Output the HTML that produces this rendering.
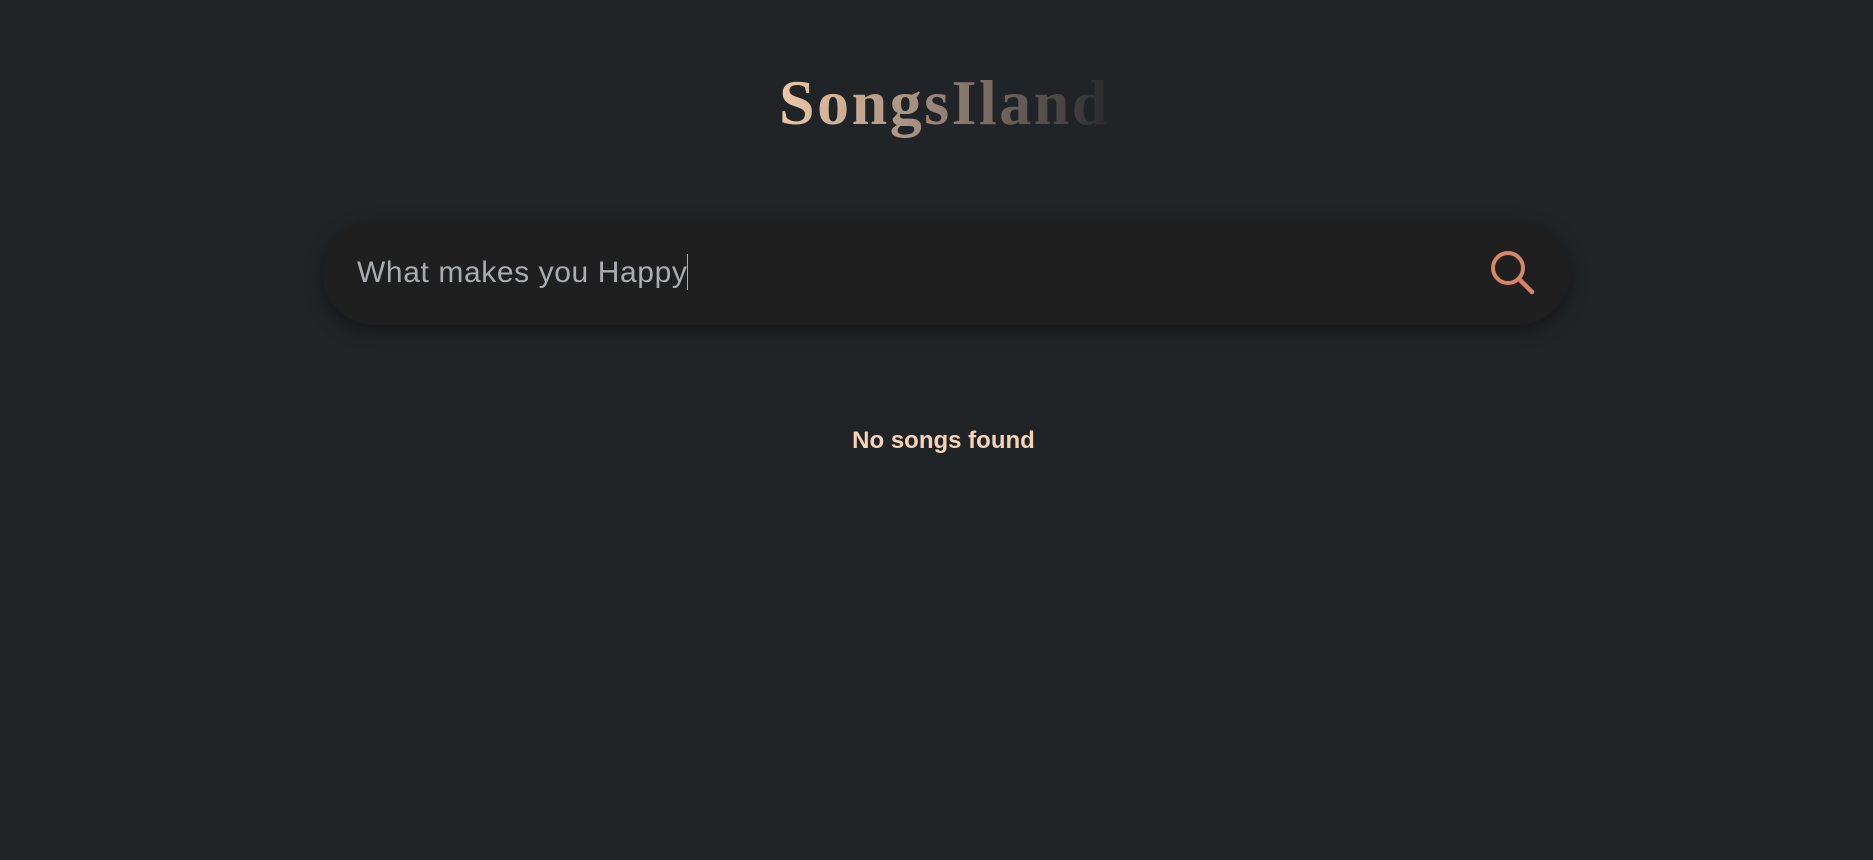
<!DOCTYPE html>
<html><head><meta charset="utf-8"><style>
html,body{margin:0;width:1873px;height:860px;background:#212427;overflow:hidden}
.t{position:absolute;left:8px;width:1873px;top:66px;text-align:center;font:bold 64px "Liberation Serif",serif;letter-spacing:2.5px}
.t span{background:linear-gradient(90deg,#f0c9a8 0%,#a89282 40%,#5f5753 75%,#25272a 100%);-webkit-background-clip:text;background-clip:text;color:transparent;display:inline-block;padding:0 4px}
.box{position:absolute;left:322px;top:220px;width:1248px;height:105px;border-radius:53px;background:#1f1f20;box-shadow:0 6px 18px rgba(0,0,0,.35)}
.q{position:absolute;left:357px;top:254px;font:30px "Liberation Sans",sans-serif;color:#a9acb0;letter-spacing:0.6px}
.cur{display:inline-block;width:1px;height:36px;background:#a9acb0;vertical-align:-8px}
.ic{position:absolute;left:1487px;top:247px}
.n{position:absolute;left:0;width:1887px;top:427px;text-align:center;font:bold 24px "Liberation Sans",sans-serif;color:#f7d2b4}
</style></head><body>
<div class="t"><span>SongsIland</span></div>
<div class="box"></div>
<div class="q">What makes you Happy<span class="cur"></span></div>
<svg class="ic" width="50" height="50" viewBox="0 0 50 50"><circle cx="21" cy="21" r="15" fill="none" stroke="#d98466" stroke-width="4"/><line x1="32" y1="32" x2="45" y2="45" stroke="#d98466" stroke-width="4.5" stroke-linecap="round"/></svg>
<div class="n">No songs found</div>
</body></html>
